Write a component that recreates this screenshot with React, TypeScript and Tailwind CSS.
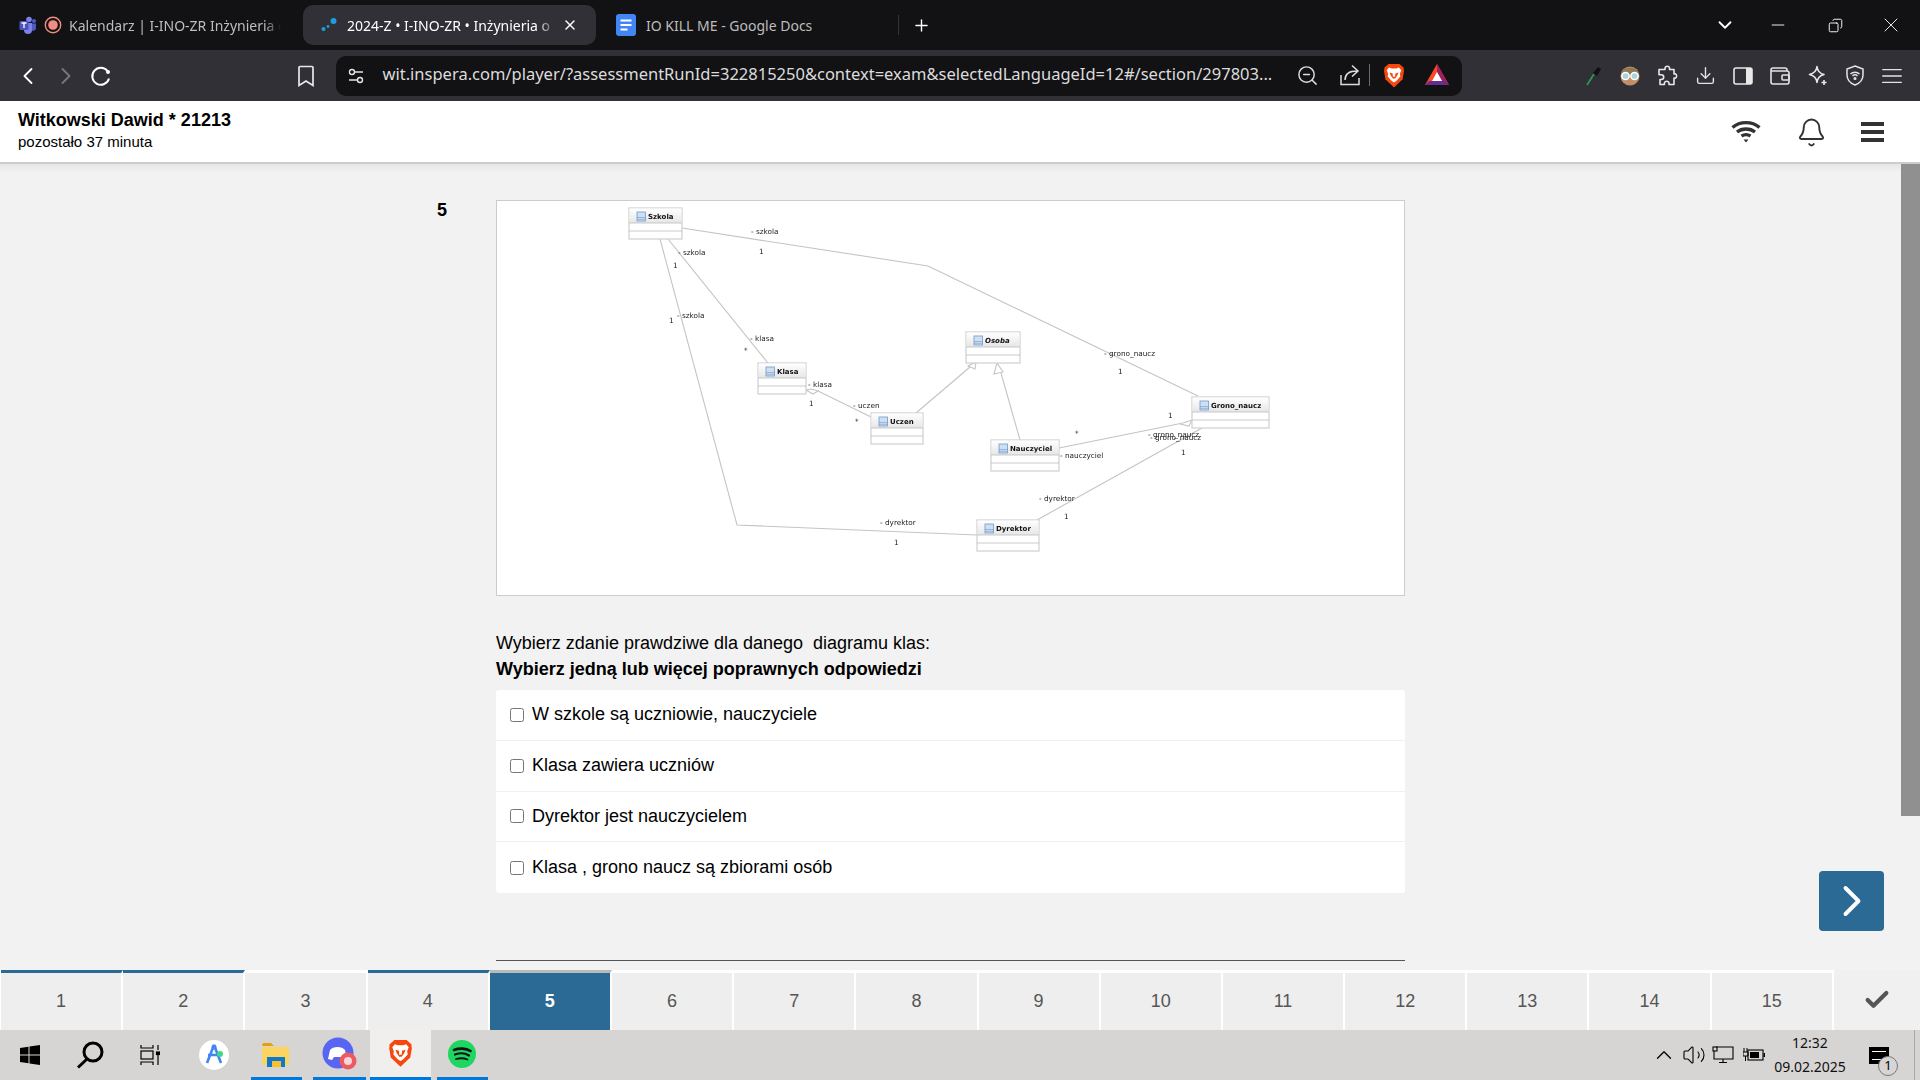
import { Bell, Check, ChevronDown, ChevronLeft, ChevronRight, ChevronUp, Copy, Download, Menu, Minus, Plus, Volume2, X, ZoomOut } from "lucide-react";
import type { ReactNode } from "react";

const browserFont = "[font-family:'Noto_Sans',sans-serif]";

function BraveLogo({ size = 22 }: { size?: number }) {
	return (
		<svg width={size} height={size * 1.15} viewBox="0 0 24 28">
			<path d="M6 1 H18 L22.5 5 L23 9 L21.5 18 L12 27 L2.5 18 L1 9 L1.5 5 Z" fill="#f4480f" />
			<path d="M6.5 5 L9.5 6 H14.5 L17.5 5 L20 8 L18.5 12 L19 15 L14.5 20 L12 21.5 L9.5 20 L5 15 L5.5 12 L4 8 Z" fill="#fff" />
			<path d="M7 10.5 L10.5 11.5 L10.8 15.5 L12 15 L13.2 15.5 L13.5 11.5 L17 10.5 L15.5 14 L13 17.5 L12 17 L11 17.5 L8.5 14 Z" fill="#f4480f" />
		</svg>
	);
}

function TeamsLogo() {
	return (
		<svg width="18" height="18" viewBox="0 0 18 18">
			<circle cx="10" cy="3.5" r="2.8" fill="#7b83eb" />
			<circle cx="15" cy="5" r="2" fill="#5059c9" />
			<path d="M12 7.5 h5 v5 a3 3 0 0 1 -5 1.5 Z" fill="#5059c9" />
			<path d="M5 7 h8 v7 a3.5 3.5 0 0 1 -8 0 Z" fill="#7b83eb" />
			<rect x="0.5" y="5" width="9" height="9" rx="1" fill="#4b53bc" />
			<path d="M2.5 7 h5 M5 7 v5" stroke="#fff" strokeWidth="1.3" />
		</svg>
	);
}

function Tab({ className, children }: { className: string; children: ReactNode }) {
	return <div className={`flex h-[40px] shrink-0 items-center ${className}`}>{children}</div>;
}

function TabStrip() {
	return (
		<div className={`flex h-[50px] items-center bg-[#121214] text-[14px] ${browserFont}`}>
			<Tab className="w-[303px] gap-[7px] pl-[19px]">
				<TeamsLogo />
				<svg width="18" height="18" viewBox="0 0 18 18">
					<circle cx="9" cy="9" r="7.7" fill="none" stroke="#f28b82" strokeWidth="1.4" />
					<circle cx="9" cy="9" r="4.8" fill="#f28b82" />
				</svg>
				<span className="whitespace-nowrap text-[#bdbdbd] [mask-image:linear-gradient(to_right,black_195px,transparent_212px)]">
					Kalendarz | I-INO-ZR Inżynieria o
				</span>
			</Tab>
			<Tab className="w-[293px] rounded-[10px] bg-[#303036] pl-[17px]">
				<svg width="18" height="18" viewBox="0 0 18 18">
					<circle cx="3.5" cy="13" r="2" fill="#1a9ee0" />
					<circle cx="8" cy="10.5" r="1.4" fill="#1a9ee0" />
					<circle cx="13.5" cy="5" r="3" fill="#1a9ee0" />
				</svg>
				<span className="ml-[9px] w-[220px] whitespace-nowrap text-white [mask-image:linear-gradient(to_right,black_190px,transparent_210px)]">
					2024-Z • I-INO-ZR • Inżynieria o
				</span>
				<X className="-ml-[5px] h-[16px] w-[16px] text-white" strokeWidth={2.2} />
			</Tab>
			<Tab className="w-[302px] gap-[9px] pl-[19px]">
				<svg width="22" height="22" viewBox="0 0 22 22">
					<rect x="1" y="0" width="20" height="22" rx="3" fill="#4285f4" />
					<path d="M5.5 6.5 h11 M5.5 11 h11 M5.5 15.5 h7" stroke="#fff" strokeWidth="2" />
				</svg>
				<span className="whitespace-nowrap text-[#bdbdbd]">IO KILL ME - Google Docs</span>
			</Tab>
			<div className="h-[20px] w-px shrink-0 bg-[#333338]" />
			<div className="flex w-[44px] shrink-0 justify-center">
				<Plus className="h-[19px] w-[19px] text-white" strokeWidth={1.8} />
			</div>
			<div className="flex-1" />
			<div className="flex w-[48px] justify-center">
				<ChevronDown className="h-[22px] w-[22px] text-white" strokeWidth={2} />
			</div>
			<div className="flex w-[58px] justify-center">
				<Minus className="h-[20px] w-[20px] text-white" strokeWidth={1.1} />
			</div>
			<div className="flex w-[56px] justify-center">
				<Copy className="h-[15px] w-[15px] -scale-x-100 text-white" strokeWidth={1.5} />
			</div>
			<div className="flex w-[57px] justify-center pr-[1px]">
				<X className="h-[24px] w-[24px] text-white" strokeWidth={0.9} />
			</div>
		</div>
	);
}

function BatLogo() {
	return (
		<svg width="24" height="22" viewBox="0 0 24 22">
			<path d="M12 0 L24 21 L0 21 Z" fill="#ff4724" />
			<path d="M12 0 L24 21 L19 21 L12 8 Z" fill="#9e1f63" />
			<path d="M0 21 L24 21 L20 17 L4 17 Z" fill="#662d91" />
			<path d="M12 8 L17 17 L7 17 Z" fill="#fff" />
		</svg>
	);
}

function ToolbarIcon({ children }: { children: ReactNode }) {
	return <div className="flex w-[37.5px] shrink-0 justify-center text-[#e4e4e4]">{children}</div>;
}

function Toolbar() {
	return (
		<div className={`flex h-[51px] items-center bg-[#303036] ${browserFont}`}>
			<div className="flex w-[120px] shrink-0 items-center pl-[14px] text-white">
				<ChevronLeft className="h-[28px] w-[28px]" strokeWidth={1.6} />
				<ChevronRight className="ml-[10px] h-[28px] w-[28px] text-[#77777c]" strokeWidth={1.6} />
				<svg className="ml-[10px]" width="22" height="22" viewBox="0 0 22 22" fill="none" stroke="#fff" strokeWidth="2">
					<path d="M17.5 6 A8.5 8.5 0 1 0 19 13.5" />
					<circle cx="18" cy="7" r="2" fill="#fff" stroke="none" />
				</svg>
			</div>
			<div className="flex w-[215.5px] shrink-0 justify-end pr-[19px]">
				<svg width="22" height="24" viewBox="0 0 22 24" fill="none" stroke="#e8e8e8" strokeWidth="1.7">
					<path d="M5 2.5 h12 a1 1 0 0 1 1 1 V21.5 L11 17 L4 21.5 V3.5 a1 1 0 0 1 1 -1 Z" />
				</svg>
			</div>
			<div className="flex h-[40px] w-[1126.5px] shrink-0 items-center rounded-[10px] bg-[#121214]">
				<svg className="ml-[11px] shrink-0" width="18" height="18" viewBox="0 0 18 18" fill="none" stroke="#e4e4e4" strokeWidth="1.4">
					<circle cx="5" cy="5" r="2.5" />
					<path d="M8 5 h8 M2 13 h8" />
					<circle cx="13" cy="13" r="2.5" />
				</svg>
				<span className="-mt-[2px] ml-[18px] w-[898px] shrink-0 whitespace-nowrap text-[16.5px] text-[#dcdcdc]">
					wit.inspera.com/player/?assessmentRunId=322815250&amp;context=exam&amp;selectedLanguageId=12#/section/297803...
				</span>
				<div className="flex items-center pl-[15px]">
					<ZoomOut className="h-[23px] w-[23px] text-[#dcdcdc]" strokeWidth={1.5} />
					<svg className="ml-[20px]" width="22" height="22" viewBox="0 0 22 22" fill="none" stroke="#dcdcdc" strokeWidth="1.5">
						<path d="M2 11 V20.5 H20 V14" />
						<path d="M6 16 C6 9 11 7 18 7 M13 1.5 L19 7 L13 12.5" />
					</svg>
					<div className="ml-[8px] h-[22px] w-px bg-[#6a6a6a]" />
					<div className="ml-[13px]"><BraveLogo /></div>
					<div className="ml-[20px]"><BatLogo /></div>
				</div>
			</div>
			<div className="flex flex-1 items-center pl-[112px]">
				<ToolbarIcon>
					<svg width="20" height="22" viewBox="0 0 20 22">
						<path d="M4 20 L11 9" stroke="#2e9b57" strokeWidth="1.6" />
						<path d="M10 8 L15 2 L18 4 L14 11 Z" fill="#111" />
					</svg>
				</ToolbarIcon>
				<ToolbarIcon>
					<svg width="20" height="20" viewBox="0 0 20 20">
						<circle cx="10" cy="10" r="9.5" fill="#c48d68" />
						<path d="M1 8 A9.5 9.5 0 0 1 19 8 Z" fill="#8d7a5a" />
						<circle cx="5.5" cy="10" r="3.6" fill="#a9d4dc" stroke="#fff" strokeWidth="1.5" />
						<circle cx="14.5" cy="10" r="3.6" fill="#a9d4dc" stroke="#fff" strokeWidth="1.5" />
					</svg>
				</ToolbarIcon>
				<ToolbarIcon>
					<svg width="21" height="21" viewBox="0 0 21 21" fill="none" stroke="#e8e8e8" strokeWidth="1.6" strokeLinejoin="round">
						<path d="M8 3 a2.4 2.4 0 0 1 4.6 0 L12.5 4.5 H17 V9 L18.2 8.8 a2.4 2.4 0 0 1 0 4.4 L17 13 V19.5 H12 V18 a2.4 2.4 0 0 0 -4.6 0 V19.5 H3 V14.5 H4.3 a2.4 2.4 0 0 0 0 -4.8 H2 V4.5 H8 Z" />
					</svg>
				</ToolbarIcon>
				<ToolbarIcon>
					<Download className="h-[21px] w-[21px]" strokeWidth={1.6} />
				</ToolbarIcon>
				<ToolbarIcon>
					<svg width="20" height="18" viewBox="0 0 20 18">
						<rect x="1" y="1" width="18" height="16" rx="2" fill="none" stroke="#e8e8e8" strokeWidth="1.6" />
						<rect x="13" y="1" width="6" height="16" fill="#e8e8e8" />
					</svg>
				</ToolbarIcon>
				<ToolbarIcon>
					<svg width="20" height="18" viewBox="0 0 20 18" fill="none" stroke="#e4e4e4" strokeWidth="1.6">
						<path d="M17 4 V3 a2 2 0 0 0 -2 -2 H3 a2 2 0 0 0 -2 2 V15 a2 2 0 0 0 2 2 H17 a2 2 0 0 0 2 -2 V6 a2 2 0 0 0 -2 -2 H1.5" />
						<rect x="12" y="8" width="7" height="5" rx="1" />
					</svg>
				</ToolbarIcon>
				<ToolbarIcon>
					<svg width="20" height="21" viewBox="0 0 20 21" fill="none" stroke="#e8e8e8" strokeWidth="1.6" strokeLinejoin="round">
						<path d="M9 1.5 C9.5 6 11.5 8.5 16 9.5 C11.5 10.5 9.5 13 9 17.5 C8.5 13 6 10.5 1.5 9.5 C6 8.5 8.5 6 9 1.5 Z" />
						<path d="M16 15 v5 M13.5 17.5 h5" />
					</svg>
				</ToolbarIcon>
				<ToolbarIcon>
					<svg width="18" height="21" viewBox="0 0 18 21" fill="none" stroke="#e4e4e4" strokeWidth="1.5">
						<path d="M9 1 L17 4 V10 C17 15 13 18.5 9 20 C5 18.5 1 15 1 10 V4 Z" />
						<path d="M4.5 9 a6.5 6.5 0 0 1 9 0 M6.5 11 a3.6 3.6 0 0 1 5 0" />
						<circle cx="9" cy="13.5" r="0.8" fill="#e4e4e4" />
					</svg>
				</ToolbarIcon>
				<ToolbarIcon>
					<Menu className="-ml-[2px] h-[22px] w-[22px] scale-x-125" strokeWidth={1.4} />
				</ToolbarIcon>
			</div>
		</div>
	);
}

function PageHeader() {
	return (
		<div className="flex h-[63px] shrink-0 items-center justify-between border-b-2 border-[#cccccc] bg-white pl-[18px] pr-[36px]">
			<div className="-mt-[2px] flex flex-col">
				<span className="text-[18px] leading-[22px] font-bold text-black">Witkowski Dawid * 21213</span>
				<span className="text-[15px] leading-[21px] text-black">pozostało 37 minuta</span>
			</div>
			<div className="flex items-center">
				<svg className="mr-[-1px]" width="30" height="23" viewBox="0 0 30 23" fill="none" stroke="#333" strokeWidth="3.4">
					<path d="M1.5 7.5 C9 1 21 1 28.5 7.5 M6 12 C11 8 19 8 24 12 M10.5 16 C13 14.5 17 14.5 19.5 16" />
					<path d="M12.5 19.5 h5 L15 22.5 Z" fill="#333" stroke="none" />
				</svg>
				<Bell className="ml-[36px] mt-[1px] h-[31px] w-[31px] text-[#333]" strokeWidth={1.5} />
				<div className="ml-[34px] flex w-[23px] flex-col gap-[4px]">
					<div className="h-[4px] bg-[#333]" />
					<div className="h-[4px] bg-[#333]" />
					<div className="h-[4px] bg-[#333]" />
				</div>
			</div>
		</div>
	);
}

function UmlClass({ x, y, w, name, italic }: { x: number; y: number; w: number; name: string; italic?: boolean }) {
	return (
		<g>
			<rect x={x} y={y} width={w} height={31} fill="#fff" stroke="#cfcfcf" strokeWidth="1.2" />
			<rect x={x + 0.5} y={y + 0.5} width={w - 1} height={14.5} fill="url(#umlHead)" />
			<path d={`M${x} ${y + 15} h${w} M${x} ${y + 23} h${w}`} stroke="#bdbdbd" strokeWidth="0.8" />
			<rect x={x + 8} y={y + 4} width={8.5} height={9} fill="#cfdff0" stroke="#6d9bd0" strokeWidth="0.8" />
			<path d={`M${x + 8} ${y + 9.5} h8.5 M${x + 8} ${y + 11.3} h8.5`} stroke="#6d9bd0" strokeWidth="0.6" />
			<text x={x + 19} y={y + 10.5} fontStyle={italic ? "italic" : undefined} className="fill-[#111] text-[7px] font-bold [font-family:'DejaVu_Sans',sans-serif]">
				{name}
			</text>
		</g>
	);
}

const labels: [number, number, string][] = [
	[751, 234, "- szkola"],
	[759, 254, "1"],
	[678, 255, "- szkola"],
	[673, 268, "1"],
	[677, 318, "- szkola"],
	[669, 323, "1"],
	[750, 341, "- klasa"],
	[744, 353, "*"],
	[808, 387, "- klasa"],
	[809, 406, "1"],
	[853, 408, "- uczen"],
	[855, 424, "*"],
	[1104, 356, "- grono_naucz"],
	[1118, 374, "1"],
	[1168, 418, "1"],
	[1148, 437, "- grono_naucz"],
	[1150, 440, "- grono_naucz"],
	[1075, 436, "*"],
	[1060, 458, "- nauczyciel"],
	[1181, 455, "1"],
	[1039, 501, "- dyrektor"],
	[1064, 519, "1"],
	[880, 525, "- dyrektor"],
	[894, 545, "1"],
];

function ClassDiagram() {
	return (
		<svg className="h-[396px] w-[909px] border border-[#cccccc] bg-white blur-[0.25px]" viewBox="497 201 907 394">
			<defs>
				<linearGradient id="umlHead" x1="0" y1="0" x2="0" y2="1">
					<stop offset="0" stopColor="#ffffff" />
					<stop offset="1" stopColor="#e6e6e6" />
				</linearGradient>
			</defs>
			<g fill="none" stroke="#c4c4c4" strokeWidth="1.1">
				<path d="M682 228 L928 266 L1198 396" />
				<path d="M668 239 L768 363" />
				<path d="M660 239 L737 525 L977 535" />
				<path d="M806 390 L811 389 L818 391 L813 394 Z M818 391 L871 417" />
				<path d="M916 413 L970 367" />
				<path d="M1020 440 L1001 373" />
				<path d="M1059 448 L1183 423 L1192 420 L1189 426 L1180 424" />
				<path d="M1037 520 L1202 428" />
				<path d="M976 362 L975 369 L968 366 Z" fill="#fff" />
				<path d="M997 363 L1003 372 L994 374 Z" fill="#fff" />
			</g>
			<UmlClass x={629} y={208} w={53} name="Szkola" />
			<UmlClass x={758} y={363} w={48} name="Klasa" />
			<UmlClass x={966} y={332} w={54} name="Osoba" italic />
			<UmlClass x={871} y={413} w={52} name="Uczen" />
			<UmlClass x={991} y={440} w={68} name="Nauczyciel" />
			<UmlClass x={1192} y={397} w={77} name="Grono_naucz" />
			<UmlClass x={977} y={520} w={62} name="Dyrektor" />
			{labels.map(([x, y, text]) => (
				<text key={`${x}-${y}`} x={x} y={y} className="fill-[#222] text-[7.3px] [font-family:'DejaVu_Sans',sans-serif]">
					{text}
				</text>
			))}
		</svg>
	);
}

const answers = [
	"W szkole są uczniowie, nauczyciele",
	"Klasa zawiera uczniów",
	"Dyrektor jest nauczycielem",
	"Klasa , grono naucz są zbiorami osób",
];

function Question() {
	return (
		<div className="relative flex flex-1 overflow-hidden bg-[#f2f2f2]">
			<div className="absolute left-0 right-0 top-0 h-[8px] bg-gradient-to-b from-[#e6e6e6] to-[#f2f2f2]" />
			<div className="w-[496px] shrink-0 pl-[437px] pt-[36px] text-[18px] leading-[20px] font-bold text-black">5</div>
			<div className="w-[909px] shrink-0 pt-[36px]">
				<ClassDiagram />
				<p className="mt-[34px] text-[18px] leading-[26px] whitespace-pre-wrap text-black">Wybierz zdanie prawdziwe dla danego  diagramu klas:</p>
				<p className="text-[18px] leading-[26px] font-bold text-black">Wybierz jedną lub więcej poprawnych odpowiedzi</p>
				<div className="mt-[8px] divide-y divide-[#f0f0f0] rounded-[3px] bg-white">
					{answers.map((answer) => (
						<label key={answer} className="flex h-[50.75px] items-center pl-[14px] text-[18px] text-black">
							<input type="checkbox" readOnly className="h-[14px] w-[14px]" />
							<span className="ml-[8px]">{answer}</span>
						</label>
					))}
				</div>
				<div className="mt-[67px] h-px bg-[#555555]" />
			</div>
			<div className="absolute right-[36px] top-[707px] flex h-[60px] w-[65px] items-center justify-center rounded-[4px] bg-[#2b6a94]">
				<ChevronRight className="h-[52px] w-[52px] text-white" strokeWidth={1.8} />
			</div>
			<div className="absolute right-0 top-0 h-[652px] w-[19px] bg-[#909090]" />
		</div>
	);
}

const answered = [1, 2, 4];

function QuestionNav() {
	const items = Array.from({ length: 15 }, (_, i) => i + 1);
	return (
		<div className="flex h-[60px] shrink-0 bg-white pl-px">
			{items.map((n) => {
				const current = n === 5;
				const done = answered.includes(n);
				return (
					<div
						key={n}
						className={`flex w-[122.2px] shrink-0 items-center justify-center border-r-2 border-t-[3px] border-r-white text-[18px] ${
							current
								? "border-t-[#b9b9b9] bg-[#2b6a94] font-bold text-white"
								: done
									? "border-t-[#2b6a94] bg-[#eeeeee] text-[#555555]"
									: "border-t-white bg-[#eeeeee] text-[#555555]"
						}`}
					>
						{n}
					</div>
				);
			})}
			<div className="flex flex-1 items-center justify-center bg-[#f0f0f0]">
				<Check className="h-[28px] w-[28px] text-[#555555]" strokeWidth={3.6} />
			</div>
		</div>
	);
}

function TaskSlot({ className, active, bar, children }: { className: string; active?: boolean; bar?: string; children: ReactNode }) {
	return (
		<div className={`flex h-[50px] shrink-0 flex-col ${active ? "bg-[#f0efee]" : ""} ${className}`}>
			<div className="flex flex-1 items-center justify-center">{children}</div>
			{bar ? <div className={`h-[3px] bg-[#0078d7] ${bar}`} /> : null}
		</div>
	);
}

function Taskbar() {
	return (
		<div className="flex h-[50px] shrink-0 items-center bg-[#d6d5d3] [font-family:'Noto_Sans',sans-serif]">
			<TaskSlot className="w-[60px]">
				<svg width="20" height="20" viewBox="0 0 20 20" fill="#000">
					<path d="M0 3 L8.5 1.8 V9.5 H0 Z M9.5 1.6 L20 0 V9.5 H9.5 Z M0 10.5 H8.5 V18.2 L0 17 Z M9.5 10.5 H20 V20 L9.5 18.4 Z" />
				</svg>
			</TaskSlot>
			<TaskSlot className="w-[60px]">
				<svg width="30" height="28" viewBox="0 0 30 28" fill="none" stroke="#000" strokeWidth="3">
					<circle cx="18" cy="11" r="9" />
					<path d="M12 18 L3 26.5" />
				</svg>
			</TaskSlot>
			<TaskSlot className="w-[60px]">
				<svg width="20" height="20" viewBox="0 0 20 20" fill="none" stroke="#000" strokeWidth="1.2">
					<path d="M1 0 V3 H13 V0 M1 20 V17 H13 V20" />
					<rect x="1" y="6" width="12" height="8" />
					<path d="M18 0 V5 M18 10 V20" />
					<rect x="16.5" y="7" width="3" height="2.5" fill="#000" />
				</svg>
			</TaskSlot>
			<TaskSlot className="w-[68px]">
				<svg width="30" height="30" viewBox="0 0 30 30">
					<circle cx="15" cy="15" r="15" fill="#fff" />
					<path d="M15 5 L8 23 M15 5 L22 23 M9 15 H21" stroke="#4285f4" strokeWidth="2.6" fill="none" />
					<circle cx="15" cy="7" r="2.5" fill="#4285f4" />
					<circle cx="21" cy="14" r="3" fill="#3ddc84" />
				</svg>
			</TaskSlot>
			<TaskSlot className="w-[61px]" bar="ml-[3px] mr-[7px]">
				<svg className="mt-[3px] -ml-[5px]" width="28" height="24" viewBox="0 0 28 24">
					<path d="M0 2 a2 2 0 0 1 2 -2 H9 L12 3 H1 Z" fill="#e0a30f" />
					<rect x="0" y="4" width="27" height="18" fill="#fbd55f" />
					<path d="M5 14 H23 V24 H19 V18 H10 V24 H5 Z" fill="#0f78c8" />
					<rect x="10" y="18" width="9" height="6" fill="#fbc02d" />
				</svg>
			</TaskSlot>
			<TaskSlot className="w-[61px]" bar="mx-[4px]">
				<svg width="36" height="36" viewBox="0 0 36 36">
					<circle cx="16" cy="17" r="15.5" fill="#5865f2" />
					<path d="M8 14 C11 10 20 10 23 14 L25 23 L21 24 L19 21 H12 L10 24 L6 23 Z" fill="#fff" />
					<circle cx="26" cy="25" r="8.5" fill="#ee5a62" />
					<circle cx="26" cy="25" r="4" fill="#f8d7d9" />
				</svg>
			</TaskSlot>
			<TaskSlot className="w-[61px]" active bar="mx-0">
				<BraveLogo size={25} />
			</TaskSlot>
			<TaskSlot className="w-[61px]" bar="ml-[6px] mr-[4px]">
				<svg width="28" height="28" viewBox="0 0 28 28" fill="none" stroke="#111" strokeLinecap="round">
					<circle cx="14" cy="14" r="14" fill="#1ed760" stroke="none" />
					<path d="M6 10 C11 8 18 8 22.5 11" strokeWidth="2.6" />
					<path d="M7 14.5 C11 13 17 13 21 15.5" strokeWidth="2.2" />
					<path d="M8 19 C11.5 18 16 18 19.5 19.5" strokeWidth="1.8" />
				</svg>
			</TaskSlot>
			<div className="flex-1" />
			<ChevronUp className="-ml-[2px] h-[26px] w-[26px] text-black" strokeWidth={1.2} />
			<Volume2 className="ml-[5px] h-[24px] w-[24px] text-black" strokeWidth={1.1} />
			<svg className="ml-[6px]" width="22" height="18" viewBox="0 0 22 18" fill="none" stroke="#000" strokeWidth="1.1">
				<path d="M4 1 H21 V13 H2 V5 M11 13 V16 M7 16.5 H15" />
				<rect x="1" y="1" width="4" height="4" />
			</svg>
			<svg className="ml-[9px]" width="22" height="14" viewBox="0 0 22 14">
				<rect x="5" y="2" width="15" height="10" fill="none" stroke="#000" strokeWidth="1.1" />
				<rect x="7" y="4" width="9" height="6" fill="#000" />
				<path d="M0 4 H5 V8 H0 Z M2.5 8 V13 M1 0 V4 M4 0 V4" stroke="#000" fill="none" />
				<rect x="20.5" y="5" width="1.5" height="4" fill="#000" />
			</svg>
			<div className="ml-[9px] flex w-[72px] flex-col items-center text-[14px] leading-[24px] text-[#111]">
				<span>12:32</span>
				<span>09.02.2025</span>
			</div>
			<div className="relative ml-[23px] mr-[25px] h-[17px] w-[20px] bg-black">
				<div className="mx-[3px] mt-[4px] h-[9px] border-y border-white" />
				<div className="absolute left-[9px] top-[9px] flex h-[20px] w-[20px] items-center justify-center rounded-full border border-[#777] bg-[#d6d5d3] text-[13px] text-black">
					1
				</div>
			</div>
			<div className="mr-[5px] h-[50px] w-px bg-[#a9a8a6]" />
		</div>
	);
}

export default function App() {
	return (
		<div className="flex h-screen w-full flex-col overflow-hidden [font-family:'Liberation_Sans',sans-serif]">
			<TabStrip />
			<Toolbar />
			<PageHeader />
			<Question />
			<QuestionNav />
			<Taskbar />
		</div>
	);
}
